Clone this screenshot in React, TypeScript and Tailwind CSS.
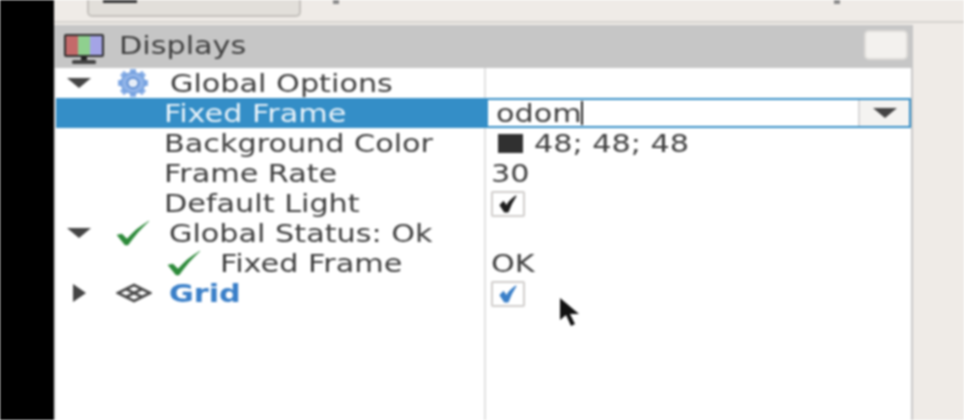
import type { ReactNode } from 'react';

const font = { fontFamily: '"DejaVu Sans", sans-serif' };

// the capture is stretched sideways, so text gets the same stretch
function Label({ children, className = '' }: { children: ReactNode; className?: string }) {
  return <span className={`inline-block origin-left scale-x-[1.21] whitespace-nowrap ${className}`}>{children}</span>;
}

function Check() {
  return (
    <svg width="36" height="28" viewBox="0 0 36 28" className="block">
      <path d="M2 16 L7 15 L12 20 Q20 10 34 2 Q22 13 13 26 L10 26 Z" fill="#2d8a3a" stroke="#2d8a3a" strokeWidth="0.5" strokeLinejoin="round" />
    </svg>
  );
}

function SmallCheck({ color }: { color: string }) {
  return (
    <svg width="20" height="20" viewBox="0 0 18 18">
      <path d="M2 10 L5 7 L7.5 11 Q10 6 16 2 Q12 8 9 16 L6 16 Z" fill={color} stroke={color} strokeWidth="1.2" strokeLinejoin="round" />
    </svg>
  );
}

function CheckBox({ color }: { color: string }) {
  return (
    <div className="w-[34px] h-[26px] mt-[2px] rounded-[2px] border-2 border-[#d0cecc] bg-white flex items-center justify-center">
      <SmallCheck color={color} />
    </div>
  );
}

function ArrowDown() {
  return <div className="w-0 h-0 border-x-[12px] border-x-transparent border-t-[10px] border-t-[#444444]" />;
}

function ArrowRight() {
  return <div className="w-0 h-0 border-y-[9px] border-y-transparent border-l-[13px] border-l-[#444444]" />;
}

function Gear() {
  return (
    <svg width="34" height="30" viewBox="0 0 34 30">
      <g stroke="#86ade6" strokeWidth="6">
        <path d="M17 1 V29 M2 15 H32 M6 5 L28 25 M28 5 L6 25" />
      </g>
      <ellipse cx="17" cy="15" rx="12" ry="10.5" fill="#8fb3e8" stroke="#5b8fd6" strokeWidth="1" />
      <ellipse cx="17" cy="15" rx="5.5" ry="5" fill="#e6edf8" stroke="#4f82cc" strokeWidth="1.5" />
    </svg>
  );
}

function GridIcon() {
  return (
    <svg width="36" height="20" viewBox="0 0 36 20" fill="none" stroke="#4a4a4a" strokeWidth="2.6">
      <path d="M18 2 L34 10 L18 18 L2 10 Z" />
      <path d="M10 6 L26 14 M26 6 L10 14" />
    </svg>
  );
}

function Monitor() {
  return (
    <svg width="42" height="32" viewBox="0 0 42 32">
      <rect x="1" y="1" width="40" height="23" rx="2" fill="#2e2e2e" />
      <rect x="3" y="3" width="12" height="19" fill="#c46a6a" />
      <rect x="15" y="3" width="12" height="19" fill="#8fd08f" />
      <rect x="27" y="3" width="12" height="19" fill="#a4a4e6" />
      <rect x="18" y="24" width="6" height="4" fill="#222" />
      <rect x="9" y="27" width="24" height="4" rx="1.5" fill="#444" />
    </svg>
  );
}

function Row({ left, right, selected }: { left: ReactNode; right?: ReactNode; selected?: boolean }) {
  return (
    <div className={`h-[30px] flex items-center ${selected ? 'bg-[#348ec7] text-[#e8f2f9]' : 'text-[#3f3f3f]'}`}>
      <div className="w-[428px] shrink-0 h-full flex items-center">{left}</div>
      <div className={`flex-1 h-full flex items-center ${selected ? 'pl-[2px]' : 'border-l-2 border-[#e2e2e2] pl-[5px]'}`}>{right}</div>
    </div>
  );
}

export default function App() {
  return (
    <div className="relative w-[964px] h-[420px] bg-black flex overflow-hidden text-[25px] leading-none blur-[0.8px]" style={font}>
      <div className="w-[54px] shrink-0" />
      <div className="flex-1 bg-[#efebe7] flex flex-col">
        <div className="h-[23px] shrink-0 border-b-2 border-[#d6d3cf] pl-[33px] flex">
          <div className="w-[214px] h-[17px] bg-[#e2dfda] border-2 border-t-0 border-[#c4c1bc] rounded-b-[5px] pl-[14px]">
            <div className="w-[34px] h-[3px] bg-[#333333]" />
          </div>
          <div className="w-[6px] h-[4px] ml-[32px] bg-[#8a8a8a]" />
          <div className="w-[6px] h-[4px] ml-[495px] bg-[#8a8a8a]" />
        </div>
        <div className="w-[859px] mt-[2px] flex-1 flex flex-col">
          <div className="h-[43px] shrink-0 bg-[#c6c6c6] flex items-center pl-[9px] pr-[5px] text-[#404040]">
            <div className="mt-[4px]"><Monitor /></div>
            <div className="ml-[14px] flex-1 mb-[3px]"><Label>Displays</Label></div>
            <div className="w-[44px] h-[30px] mb-[3px] rounded-[5px] bg-[#f3f1ee] border-2 border-[#dedcd9]" />
          </div>
          <div className="flex-1 bg-white border-x-2 border-l-[#e4e4e4] border-r-[#c8c8c8] flex flex-col">
            <Row
              left={
                <div className="flex items-center">
                  <div className="ml-[11px]"><ArrowDown /></div>
                  <div className="ml-[25px]"><Gear /></div>
                  <Label className="ml-[20px]">Global Options</Label>
                </div>
              }
            />
            <Row
              selected
              left={<Label className="ml-[108px]">Fixed Frame</Label>}
              right={
                <div className="w-full h-full bg-white border-2 border-[#348ec7] rounded-[2px] flex items-center text-[#3f3f3f]">
                  <div className="ml-[8px] flex-1 flex items-center">
                    <Label>odom</Label>
                    <span className="w-[2px] h-[24px] ml-[14px] bg-[#222]" />
                  </div>
                  <div className="w-[51px] h-full border-l-2 border-[#d8d8d8] bg-[#f4f3f1] flex items-center justify-center"><ArrowDown /></div>
                </div>
              }
            />
            <Row
              left={<Label className="ml-[108px]">Background Color</Label>}
              right={
                <div className="flex items-center ml-[7px]">
                  <div className="w-[25px] h-[19px] bg-[#303030]" />
                  <Label className="ml-[11px]">48; 48; 48</Label>
                </div>
              }
            />
            <Row left={<Label className="ml-[108px]">Frame Rate</Label>} right={<Label>30</Label>} />
            <Row left={<Label className="ml-[108px]">Default Light</Label>} right={<CheckBox color="#1c1c1c" />} />
            <Row
              left={
                <div className="flex items-center">
                  <div className="ml-[11px]"><ArrowDown /></div>
                  <div className="ml-[24px]"><Check /></div>
                  <Label className="ml-[18px]">Global Status: Ok</Label>
                </div>
              }
            />
            <Row
              left={
                <div className="flex items-center">
                  <div className="ml-[110px]"><Check /></div>
                  <Label className="ml-[18px]">Fixed Frame</Label>
                </div>
              }
              right={<Label>OK</Label>}
            />
            <Row
              left={
                <div className="flex items-center">
                  <div className="ml-[17px]"><ArrowRight /></div>
                  <div className="ml-[30px]"><GridIcon /></div>
                  <Label className="ml-[17px] font-bold text-[#3a7fc8]">Grid</Label>
                </div>
              }
              right={<CheckBox color="#3a7fc8" />}
            />
            <div className="flex-1 flex">
              <div className="w-[428px] shrink-0" />
              <div className="border-l-2 border-[#e2e2e2]" />
            </div>
          </div>
        </div>
      </div>
      {/* mouse pointer over the panel */}
      <svg className="absolute left-[558px] top-[296px]" width="26" height="32" viewBox="0 0 26 32">
        <path d="M2 2 L2 24 L8 19 L13 30 L17 28 L12 18 L21 18 Z" fill="#111" />
      </svg>
    </div>
  );
}
